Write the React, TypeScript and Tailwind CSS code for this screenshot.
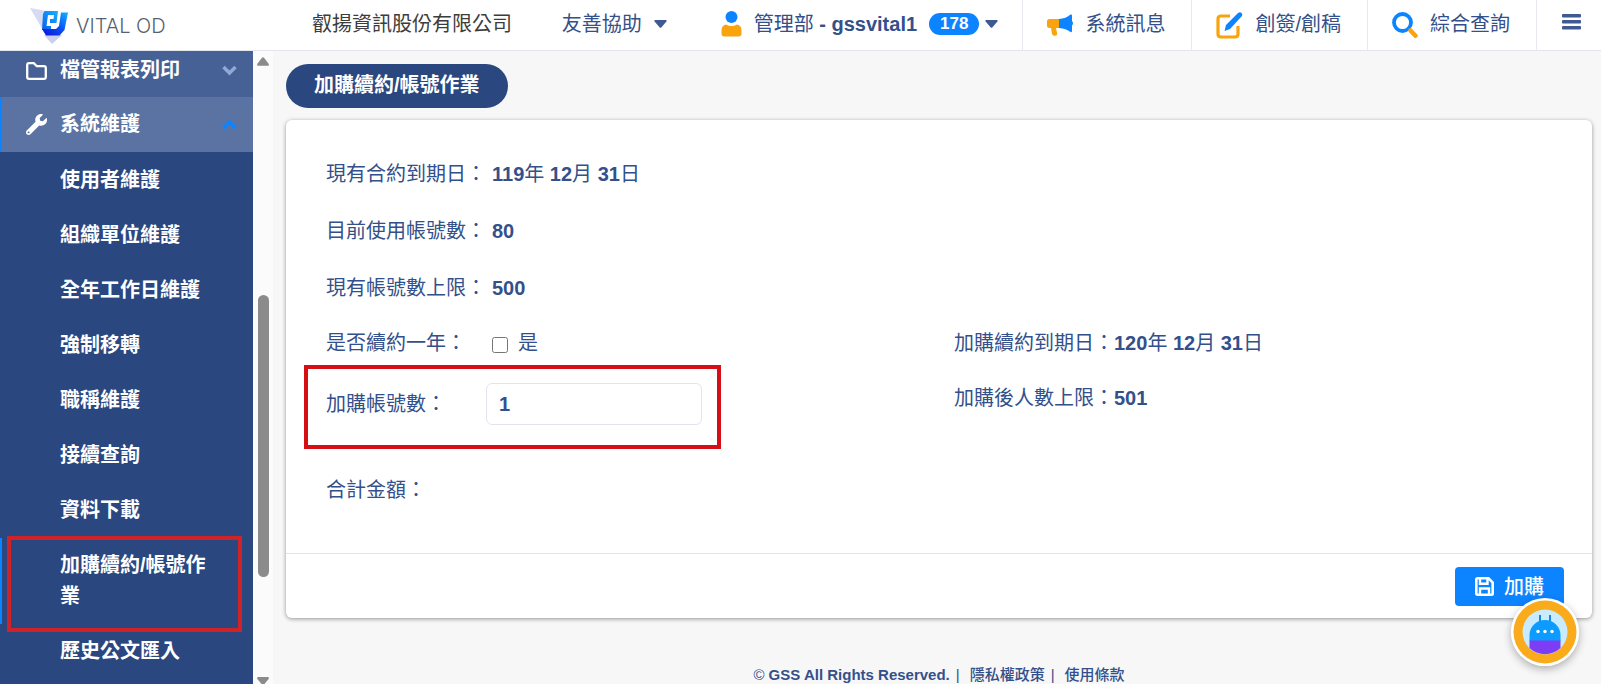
import { useState } from "react";
import type { ReactNode } from "react";
import { FaWrench } from "react-icons/fa";

const subItems = [
  "使用者維護",
  "組織單位維護",
  "全年工作日維護",
  "強制移轉",
  "職稱維護",
  "接續查詢",
  "資料下載",
  "加購續約/帳號作業",
  "歷史公文匯入",
];

export default function App() {
  return (
    <div className="flex h-screen flex-col overflow-hidden bg-[#f7f7f8] font-['Liberation_Sans','Noto_Sans_CJK_TC',sans-serif] text-xl text-[#34508a]">
      <Header />
      <div className="flex min-h-0 flex-1">
        <Sidebar active="加購續約/帳號作業" />
        <ScrollTrack />
        <main className="min-w-0 flex-1 pl-[13px] pr-[9px] pt-[13px]">
          <h1 className="inline-flex h-11 items-center rounded-full bg-[#2a4780] px-7 pb-0.5 font-bold text-white">
            加購續約/帳號作業
          </h1>
          <RenewCard />
          <footer className="mt-[47px] text-center text-[15px] leading-5">
            © <b>GSS All Rights Reserved.</b>
            <span className="mx-1.5">|</span>
            <a href="#privacy" className="ml-1 font-medium">隱私權政策</a>
            <span className="mx-1.5">|</span>
            <a href="#terms" className="ml-1 font-medium">使用條款</a>
          </footer>
        </main>
      </div>
      <ChatBot />
    </div>
  );
}

function Header() {
  return (
    <header className="flex h-[51px] shrink-0 items-stretch border-b border-[#e4e6ee] bg-white leading-[30px]">
      <a href="#home" className="flex w-[312px] shrink-0 items-center gap-2 pl-[30px] pt-0.5 text-[#57606e]">
        <Logo />
        <span className="font-['Inter',sans-serif] text-xl font-light">VITAL OD</span>
      </a>
      <span className="self-center pb-0.5 text-[#3c3c3c]">叡揚資訊股份有限公司</span>
      <div className="ml-auto flex items-center gap-[54px] pr-6 pb-0.5">
        <button className="flex items-center gap-3">
          友善協助
          <Caret />
        </button>
        <button className="flex items-center">
          <UserIcon />
          <span className="ml-3">
            管理部 <b>- gssvital1</b>
          </span>
          <span className="ml-3 mr-1.5 rounded-full bg-[#0d84ff] px-[11px] text-[17px] font-bold leading-[22px] text-white">178</span>
          <Caret />
        </button>
      </div>
      <HeaderLink href="#news" icon={<MegaphoneIcon />}>系統訊息</HeaderLink>
      <HeaderLink href="#create" icon={<ComposeIcon />}>創簽/創稿</HeaderLink>
      <HeaderLink href="#search" icon={<SearchIcon />}>綜合查詢</HeaderLink>
      <button aria-label="選單" className="border-l border-[#e8e9ee] pl-[25px] pr-5 pb-1.5">
        <svg width="19" height="16" viewBox="0 0 19 16" fill="#3f5a92">
          <rect width="19" height="3.600" rx="1" />
          <rect y="6" width="19" height="3.600" rx="1" />
          <rect y="12" width="19" height="3.600" rx="1" />
        </svg>
      </button>
    </header>
  );
}

function HeaderLink({ href, icon, children }: { href: string; icon: ReactNode; children: ReactNode }) {
  return (
    <a href={href} className="flex items-center gap-3 border-l border-[#e8e9ee] pl-6 pr-[26px]">
      {icon}
      <span className="pb-0.5">{children}</span>
    </a>
  );
}

function Sidebar({ active }: { active: string }) {
  return (
    <nav className="w-[253px] shrink-0 overflow-hidden bg-[#2a4780] font-bold leading-[31px] text-white">
      <button className="flex w-full items-center bg-[#466196] pl-[26px] pr-4 pt-1 pb-[11px] text-left">
        <FolderIcon />
        <span className="ml-[13px] flex-1">檔管報表列印</span>
        <Chevron className="text-[#8fa9d8]" />
      </button>
      <button className="flex w-full items-center border-l-2 border-[#0d84ff] bg-[#5a73a3] py-3 pl-6 pr-4 text-left">
        <FaWrench size={21} />
        <span className="ml-[13px] flex-1">系統維護</span>
        <Chevron className="rotate-180 text-[#0d84ff]" />
      </button>
      <ul className="pt-px">
        {subItems.map((item) => (
          <li key={item} className="relative">
            <a
              href="#item"
              className={`block border-l-2 py-3 pl-[58px] pr-10 ${item === active ? "border-[#0d84ff]" : "border-transparent"}`}
            >
              {item}
            </a>
            {item === active && (
              <span className="pointer-events-none absolute -top-0.5 -bottom-2 left-[7px] right-[11px] border-4 border-[#cf2229]" />
            )}
          </li>
        ))}
      </ul>
    </nav>
  );
}

function ScrollTrack() {
  return (
    <div className="flex w-5 shrink-0 flex-col items-center bg-[#fbfbfb] pt-1.5 text-[#8b8b8b]">
      <svg width="12" height="9" viewBox="0 0 12 9" fill="currentColor">
        <path d="M5 .8q1-1 2 0l4.600 6q.8 2-.8 2H1.200q-1.600 0-.8-2z" />
      </svg>
      <div className="flex-[228]" />
      <div className="w-[11px] flex-[281] rounded-full bg-[#8b8b8b]" />
      <div className="flex-[100]" />
      <svg width="12" height="7" viewBox="0 0 12 7" fill="currentColor">
        <path d="M1.200 0h9.600q1.600 0 .8 2L7.500 7h-3L.4 2Q-.4 0 1.200 0z" />
      </svg>
    </div>
  );
}

function RenewCard() {
  const [renew, setRenew] = useState(false);
  const [count, setCount] = useState("1");

  return (
    <form className="mt-3 rounded-md bg-white shadow-[0_1px_4px_rgba(0,0,0,0.4)]" onSubmit={(e) => e.preventDefault()}>
      <div className="px-10 pt-[39px] pb-12 leading-[30px]">
        <div className="flex flex-col gap-[27px]">
          <Field label="現有合約到期日："><DateText y={119} m={12} d={31} /></Field>
          <Field label="目前使用帳號數："><b>80</b></Field>
          <Field label="現有帳號數上限："><b>500</b></Field>
        </div>
        <div className="mt-[25px] grid grid-cols-2">
          <div className="flex flex-col items-start">
            <div className="flex">
              <span className="w-[166px]">是否續約一年：</span>
              <label className="flex items-center gap-2.5">
                <input
                  type="checkbox"
                  checked={renew}
                  onChange={(e) => setRenew(e.target.checked)}
                  className="mt-1 size-4"
                />
                是
              </label>
            </div>
            <div className="relative mt-[25px] flex items-center">
              <label htmlFor="count" className="w-40">加購帳號數：</label>
              <input
                id="count"
                value={count}
                onChange={(e) => setCount(e.target.value)}
                className="h-[42px] w-[216px] rounded-md border border-[#e3e5ee] px-3 font-bold"
              />
              <span className="pointer-events-none absolute -top-[18px] -right-[19px] -bottom-6 -left-[22px] border-4 border-[#d50f14]" />
            </div>
            <div className="mt-[50px]">合計金額：</div>
          </div>
          <div className="flex flex-col gap-[25px] pl-[15px]">
            <div>加購續約到期日：<DateText y={120} m={12} d={31} /></div>
            <div>加購後人數上限：<b>501</b></div>
          </div>
        </div>
      </div>
      <div className="flex justify-end border-t border-[#e2e4e8] px-7 pt-[13px] pb-3">
        <button className="flex h-[39px] items-center gap-2.5 rounded-sm bg-[#0d84ff] px-5 font-medium text-white">
          <SaveIcon />
          加購
        </button>
      </div>
    </form>
  );
}

function Field({ label, children }: { label: string; children: ReactNode }) {
  return (
    <div className="flex">
      <span className="w-[166px]">{label}</span>
      <span>{children}</span>
    </div>
  );
}

function DateText({ y, m, d }: { y: number; m: number; d: number }) {
  return (
    <>
      <b>{y}</b>年 <b>{m}</b>月 <b>{d}</b>日
    </>
  );
}

function ChatBot() {
  return (
    <button
      aria-label="客服小幫手"
      className="fixed right-[22px] bottom-[18px] size-[68px] rounded-full shadow-[0_3px_8px_rgba(0,0,0,0.3)]"
    >
      <svg viewBox="0 0 68 68">
        <circle cx="34" cy="34" r="34" fill="#fff" />
        <circle cx="34" cy="34" r="31.500" fill="#f9ab1b" />
        <circle cx="34" cy="34" r="22.500" fill="#c8ebfd" />
        <path d="M29 17v8M39 17v8" stroke="#1b86dd" strokeWidth="2" />
        <path d="M18.500 43v-6a15.500 15 0 0 1 31 0v6z" fill="#0c9bff" />
        <path d="M18.500 42.500h31V50A22.500 22.500 0 0 1 18.500 50z" fill="#7d3df5" />
        <g fill="#fff">
          <circle cx="27" cy="33.500" r="1.700" />
          <circle cx="34" cy="33.500" r="1.700" />
          <circle cx="41" cy="33.500" r="1.700" />
        </g>
      </svg>
    </button>
  );
}

function Logo() {
  return (
    <svg width="38" height="36" viewBox="0 0 38 36">
      <defs>
        <linearGradient id="frame" x1="0" y1="1" x2="1" y2="0">
          <stop offset="0" stopColor="#0a5cf0" />
          <stop offset="1" stopColor="#14b4ff" />
        </linearGradient>
        <linearGradient id="hook" x1="0" y1="1" x2="1" y2="0">
          <stop offset="0" stopColor="#0a12d8" />
          <stop offset=".5" stopColor="#0a4cf5" />
          <stop offset="1" stopColor="#14b4ff" />
        </linearGradient>
      </defs>
      <path d="M0 0l14 2.500-1 20 3 5z" fill="#d5dbf0" />
      <path d="M14 27h18L22 36z" fill="#c9d0f0" />
      <path d="M14.500 3H28l-1.500 12H20v-4h3.500l.5-4H18l-1.500 11H21v4h-9L13 6z" fill="url(#frame)" />
      <path d="M31 4.500h7L34.500 22l-5 5.500H16L12 21h14l3-3z" fill="url(#hook)" />
    </svg>
  );
}

function Caret() {
  return (
    <svg width="13" height="8" viewBox="0 0 13 8" fill="#3f5a92">
      <path d="M1.200 0h10.600q1.400.2.6 1.500L7.500 7.200q-1 1-2 0L.6 1.500Q-.2.2 1.200 0z" />
    </svg>
  );
}

function Chevron({ className }: { className: string }) {
  return (
    <svg width="15" height="11" viewBox="0 0 15 11" fill="none" className={className}>
      <path d="M1.500 2l6 6 6-6" stroke="currentColor" strokeWidth="3.500" />
    </svg>
  );
}

function FolderIcon() {
  return (
    <svg width="21" height="18" viewBox="0 0 21 18" fill="none" stroke="currentColor" strokeWidth="2.300">
      <path d="M3 1.200h4.800l3 3H18q1.800 0 1.800 1.800v9q0 1.800-1.800 1.800H3Q1.200 16.800 1.200 15V3q0-1.800 1.800-1.800z" />
    </svg>
  );
}

function SaveIcon() {
  return (
    <svg width="19" height="19" viewBox="0 0 19 19" fill="none" stroke="currentColor" strokeWidth="2.600">
      <path d="M2.500 1.300h11l4.200 4.200v11q0 1.200-1.200 1.200h-14q-1.200 0-1.200-1.200v-14q0-1.200 1.200-1.200z" />
      <path d="M5 1.500v5.300h7.500V1.500M5 17v-5.500h9V17" strokeWidth="2.400" />
    </svg>
  );
}

function UserIcon() {
  return (
    <svg width="21" height="26" viewBox="0 0 21 26">
      <circle cx="10.500" cy="6" r="6" fill="#0d84ff" />
      <path d="M5 13.500q5.500 3 11 0 4.500 1 4.500 6v3q0 3-3 3h-14q-3 0-3-3v-3q0-5 4.500-6z" fill="#f9a40f" />
    </svg>
  );
}

function MegaphoneIcon() {
  return (
    <svg width="26" height="22" viewBox="0 0 26 22">
      <path d="M2.500 5H12v9H9l1.200 5.800q0 2-2 2H7q-1.500 0-2-2L4 14H2.500Q0 14 0 11.500v-4Q0 5 2.500 5z" fill="#f9a40f" />
      <path d="M12 5q7-.5 11.500-4.500Q25 0 25 1.500V7q2 2 0 4.500V17q0 1.500-1.500 1Q19 14.500 12 14z" fill="#0d84ff" />
    </svg>
  );
}

function ComposeIcon() {
  return (
    <svg width="27" height="27" viewBox="0 0 27 27" fill="none">
      <path d="M14 4H5Q2 4 2 7v15q0 3 3 3h14q3 0 3-3v-8" stroke="#f9a40f" strokeWidth="3.200" />
      <path d="M8.500 19l1.500-6L22 1q2-1.500 3.500 0t0 3.500L14 17z" fill="#0d84ff" />
    </svg>
  );
}

function SearchIcon() {
  return (
    <svg width="26" height="26" viewBox="0 0 26 26" fill="none">
      <circle cx="10.500" cy="10.500" r="8.500" stroke="#0d84ff" strokeWidth="3.800" />
      <path d="M18.500 18.500l5 5.200" stroke="#f9a40f" strokeWidth="4.500" strokeLinecap="round" />
    </svg>
  );
}
